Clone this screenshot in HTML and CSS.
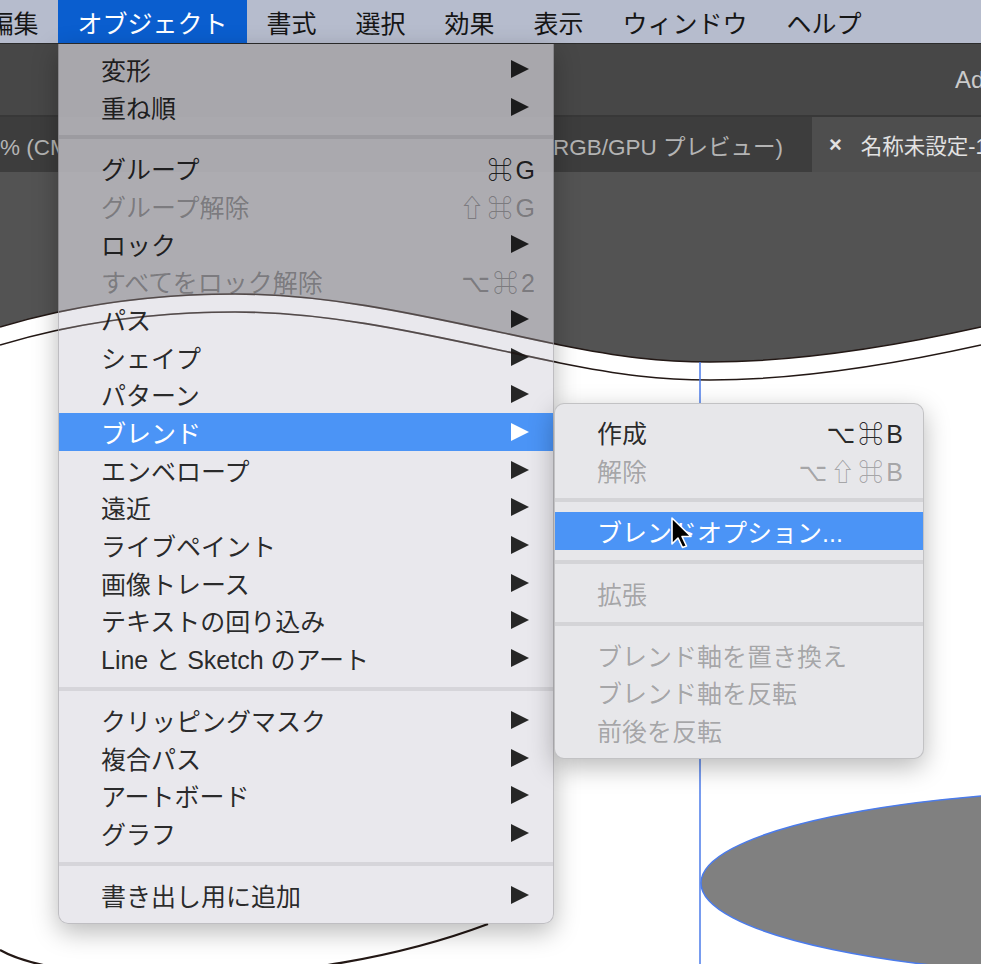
FILE: index.html
```html
<!DOCTYPE html>
<html lang="ja">
<head>
	<meta charset="UTF-8">
	<title>オブジェクト メニュー</title>
	<link rel="stylesheet" href="styles.css">
</head>
<body>
<div class="menubar">
	<span class="mb-item">編集</span>
	<span class="mb-item active">オブジェクト</span>
	<span class="mb-item">書式</span>
	<span class="mb-item">選択</span>
	<span class="mb-item">効果</span>
	<span class="mb-item">表示</span>
	<span class="mb-item">ウィンドウ</span>
	<span class="mb-item">ヘルプ</span>
</div>
<div class="appbar"><span class="app-title">Adobe Illustrator 2020</span></div>
<div class="tabbar">
	<div class="tab tab-first">% (CMYK/GPU プレビュー)</div>
	<div class="tab tab-hidden"></div>
	<div class="tab tab-second">(RGB/GPU プレビュー)</div>
	<div class="tab tab-active"><span class="tab-close">×</span>名称未設定-1 @ 66.67 % (RGB/GPU プレビュー)</div>
</div>
<div class="canvas">
	<svg class="art" width="981" height="792" viewBox="0 172 981 792">
		<rect x="0" y="172" width="981" height="792" fill="#ffffff"/>
		<path d="M0 172 H981 V327 C900 345 800 362 710 362 C660 362 620 357 560 345 C440 320 340 294 235 294 C150 294 70 306 0 327 Z" fill="#535353"/>
		<path class="wave" d="M0 327 C70 306 150 294 235 294 C340 294 440 320 560 345 C620 357 660 362 710 362 C800 362 900 345 981 327"/>
		<path class="wave" transform="translate(0 18)" d="M0 327 C70 306 150 294 235 294 C340 294 440 320 560 345 C620 357 660 362 710 362 C800 362 900 345 981 327"/>
		<line x1="700" y1="362" x2="700" y2="964" stroke="#4b7bea" stroke-width="1.5"/>
		<ellipse cx="1150" cy="883" rx="449" ry="94" fill="#808080" stroke="#4b7bea" stroke-width="1.5"/>
		<path class="wave thick" d="M0 950 C60 985 300 995 488 924"/>
	</svg>
</div>

<div class="menu main-menu">
	<div class="item"><span>変形</span><span class="arrow"></span></div>
	<div class="item"><span>重ね順</span><span class="arrow"></span></div>
	<div class="sep"></div>
	<div class="item"><span>グループ</span><span class="key">⌘G</span></div>
	<div class="item off"><span>グループ解除</span><span class="key">⇧⌘G</span></div>
	<div class="item"><span>ロック</span><span class="arrow"></span></div>
	<div class="item off"><span>すべてをロック解除</span><span class="key">⌥⌘2</span></div>
	<div class="item"><span>パス</span><span class="arrow"></span></div>
	<div class="item"><span>シェイプ</span><span class="arrow"></span></div>
	<div class="item"><span>パターン</span><span class="arrow"></span></div>
	<div class="item on"><span>ブレンド</span><span class="arrow"></span></div>
	<div class="item"><span>エンベロープ</span><span class="arrow"></span></div>
	<div class="item"><span>遠近</span><span class="arrow"></span></div>
	<div class="item"><span>ライブペイント</span><span class="arrow"></span></div>
	<div class="item"><span>画像トレース</span><span class="arrow"></span></div>
	<div class="item"><span>テキストの回り込み</span><span class="arrow"></span></div>
	<div class="item"><span>Line と Sketch のアート</span><span class="arrow"></span></div>
	<div class="sep"></div>
	<div class="item"><span>クリッピングマスク</span><span class="arrow"></span></div>
	<div class="item"><span>複合パス</span><span class="arrow"></span></div>
	<div class="item"><span>アートボード</span><span class="arrow"></span></div>
	<div class="item"><span>グラフ</span><span class="arrow"></span></div>
	<div class="sep"></div>
	<div class="item"><span>書き出し用に追加</span><span class="arrow"></span></div>
</div>

<!-- the artwork's paths seen through the translucent menu -->
<svg class="see-through" width="981" height="964" viewBox="0 0 981 964">
	<defs>
		<clipPath id="menu-clip"><rect x="59" y="44" width="494" height="880"/></clipPath>
	</defs>
	<g clip-path="url(#menu-clip)">
		<path class="wave" d="M0 327 C70 306 150 294 235 294 C340 294 440 320 560 345 C620 357 660 362 710 362"/>
		<path class="wave" transform="translate(0 18)" d="M0 327 C70 306 150 294 235 294 C340 294 440 320 560 345 C620 357 660 362 710 362"/>
	</g>
</svg>

<div class="menu sub-menu">
	<div class="item"><span>作成</span><span class="key">⌥⌘B</span></div>
	<div class="item off"><span>解除</span><span class="key">⌥⇧⌘B</span></div>
	<div class="sep"></div>
	<div class="item on"><span>ブレンドオプション...</span></div>
	<div class="sep"></div>
	<div class="item off"><span>拡張</span></div>
	<div class="sep"></div>
	<div class="item off"><span>ブレンド軸を置き換え</span></div>
	<div class="item off"><span>ブレンド軸を反転</span></div>
	<div class="item off"><span>前後を反転</span></div>
</div>

<svg class="cursor" width="28" height="38" viewBox="0 0 28 38">
	<path d="M4 4 L4 30 L10 24 L14.5 33.5 L18.5 32 L14 22.5 L23 22.5 Z" fill="#000" stroke="#fff" stroke-width="1.6" stroke-linejoin="round"/>
</svg>
</body>
</html>
```

FILE: styles.css
```css
html,body{
	margin: 0;
	padding: 0;
}
body{
	width: 981px;
	height: 964px;
	overflow: hidden;
	position: relative;
	background: #535353;
	font-family: "Liberation Sans", "Noto Sans CJK JP", "DejaVu Sans", sans-serif;
}

/* menu bar */
.menubar{
	display: flex;
	height: 43px;
	background: #b6bccd;
	border-bottom: 1px solid #2c2c2c;
	white-space: nowrap;
	overflow: hidden;
}
.mb-item{
	display: flex;
	align-items: center;
	padding: 0 19.5px;
	font-size: 25px;
	color: #161616;
}
.mb-item:first-child{
	margin-left: -31px;
}
.mb-item.active{
	background: #0a5ecf;
	color: #fff;
}

/* window chrome */
.appbar{
	height: 71px;
	background: #474747;
	display: flex;
	align-items: center;
	padding-left: 955px;
	white-space: nowrap;
	overflow: hidden;
	font-size: 24px;
	color: #cbcbcb;
}
.tabbar{
	display: flex;
	height: 57px;
	background: #474747;
	white-space: nowrap;
	overflow: hidden;
}
.tab{
	display: flex;
	align-items: center;
	font-size: 22.5px;
	color: #b4b4b4;
	overflow: hidden;
	flex: none;
	box-sizing: border-box;
	border-top: 2px solid #383838;
	background: #3d3d3d;
}
.tab-first{
	width: 58px;
}
.tab-hidden{
	width: 496px;
	border-top-color: #474747;
	background: #4a4a4a;
}
.tab-second{
	width: 258px;
	justify-content: flex-end;
	padding-right: 29px;
}
.tab-active{
	width: 169px;
	background: #4e4e4e;
	color: #e2e2e2;
	padding-left: 17px;
	font-size: 21.5px;
}
.tab-close{
	font-weight: bold;
	font-size: 22px;
	margin-right: 19px;
}

.canvas{
	height: 792px;
}
.art{
	display: block;
}
.wave{
	fill: none;
	stroke: #231815;
	stroke-width: 1.6;
}
.wave.thick{
	stroke-width: 2.2;
}

/* menus */
.menu{
	position: absolute;
	box-sizing: border-box;
	font-size: 25px;
	white-space: nowrap;
	box-shadow: 0 8px 26px rgba(0,0,0,.28);
}
.main-menu{
	left: 58px;
	top: 44px;
	width: 496px;
	padding: 6px 0 10px;
	background: rgba(221,220,227,.65);
	border: 1px solid rgba(0,0,0,.18);
	border-top: none;
	border-radius: 0 0 10px 10px;
}
.see-through{
	position: absolute;
	left: 0;
	top: 0;
	opacity: .6;
	pointer-events: none;
}
.sub-menu{
	left: 554px;
	top: 403px;
	width: 370px;
	padding: 9px 0;
	background: #e7e7ea;
	border: 1px solid rgba(0,0,0,.16);
	border-radius: 10px;
}
.item{
	display: flex;
	align-items: center;
	justify-content: space-between;
	height: 37.7px;
	padding: 0 18px 0 42px;
	color: rgba(0,0,0,.84);
}
.sub-menu .item{
	padding-right: 20px;
}
.item.off{
	color: rgba(0,0,0,.3);
}
.item.on{
	background: #4b94f6;
	color: #fff;
}
.arrow{
	width: 0;
	height: 0;
	border-left: 18px solid currentColor;
	border-top: 9px solid transparent;
	border-bottom: 9px solid transparent;
	margin-right: 6px;
}
.key{
	letter-spacing: 3px;
	margin-right: -3px;
}
.sep{
	height: 4px;
	margin: 10px 0;
	background: rgba(0,0,0,.08);
}

.cursor{
	position: absolute;
	left: 668px;
	top: 514px;
}
```
